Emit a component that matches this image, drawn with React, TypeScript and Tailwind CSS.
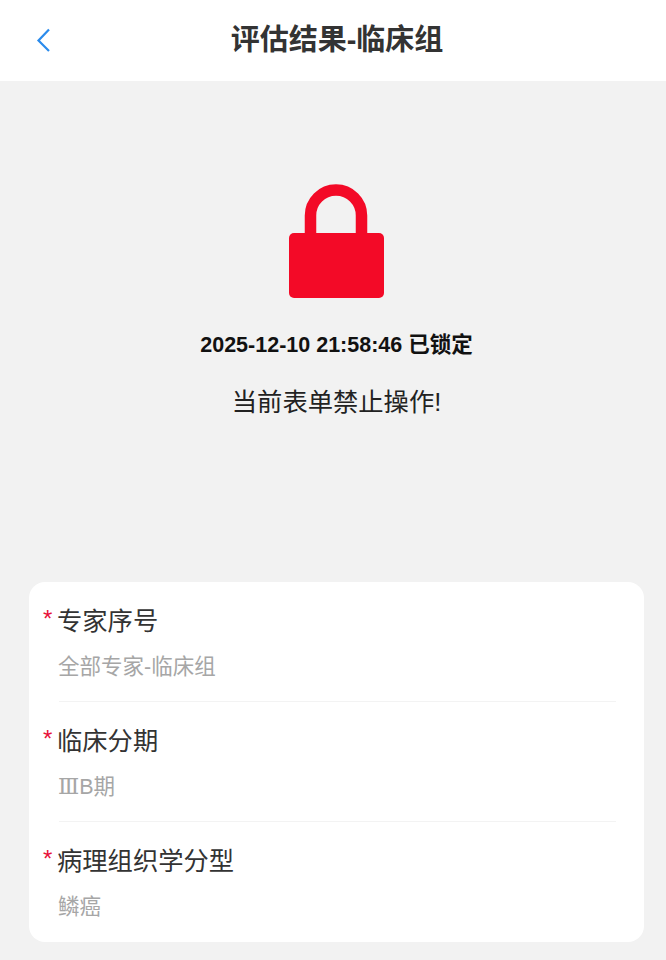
import React from 'react'

const font = '[font-family:"Liberation_Sans","Noto_Sans_CJK_SC",sans-serif]'

const fields = [
  { label: '专家序号', value: '全部专家-临床组' },
  { label: '临床分期', value: <><span className='[font-family:"DejaVu_Serif",serif] text-[22px]'>Ⅲ</span>B期</> },
  { label: '病理组织学分型', value: '鳞癌' },
]

export default function App() {
  return (
    <main className={`${font} h-[960px] overflow-hidden bg-[#f2f2f2]`}>
      <header className="relative flex h-[81px] items-center justify-center bg-white pl-[8px]">
        <button className="absolute left-[36px] top-[28px]">
          <svg width="15" height="24" viewBox="0 0 15 24" fill="none" stroke="#2b8bec" strokeWidth="2.2">
            <path d="M13 1.5 2.5 12.5 13 23" />
          </svg>
        </button>
        <h1 className="text-[29px] font-bold leading-none text-[#333333]">评估结果-临床组</h1>
      </header>

      <section className="flex h-[501px] flex-col items-center pl-[7px] pt-[103px]">
        <svg width="96" height="114" viewBox="0 0 96 114">
          <path d="M21.5 52V31.5a25.5 25.5 0 0 1 51 0V52" fill="none" stroke="#f30a27" strokeWidth="11.5" />
          <rect x="0" y="49" width="95" height="65" rx="5" fill="#f30a27" />
        </svg>
        <div className="mt-[32px] text-[21.5px] font-bold leading-[30px] text-[#111111]">2025-12-10 21:58:46 已锁定</div>
        <div className="mt-[24px] text-[25.3px] leading-[36px] text-[#222222]">当前表单禁止操作!</div>
      </section>

      <section className="mx-[29px] w-[615px] rounded-[16px] bg-white">
        {fields.map((f, i) => (
          <div key={f.label} className="h-[120px] pl-[29px] pr-[28px]">
            <div className="relative pt-[21px] text-[25.3px] leading-[36px] text-[#333333]">
              <span className="absolute left-[-15px] top-[19px] text-[24px] text-[#e8123a]">*</span>
              <span className="-ml-px">{f.label}</span>
            </div>
            <div className="mt-[12px] h-[32px] overflow-hidden text-[21.5px] leading-[32px] text-[#a6a6a6]">{f.value}</div>
            {i < 2 && <div className="ml-px mt-[18px] h-px bg-[#f3f3f3]" />}
          </div>
        ))}
      </section>
    </main>
  )
}
